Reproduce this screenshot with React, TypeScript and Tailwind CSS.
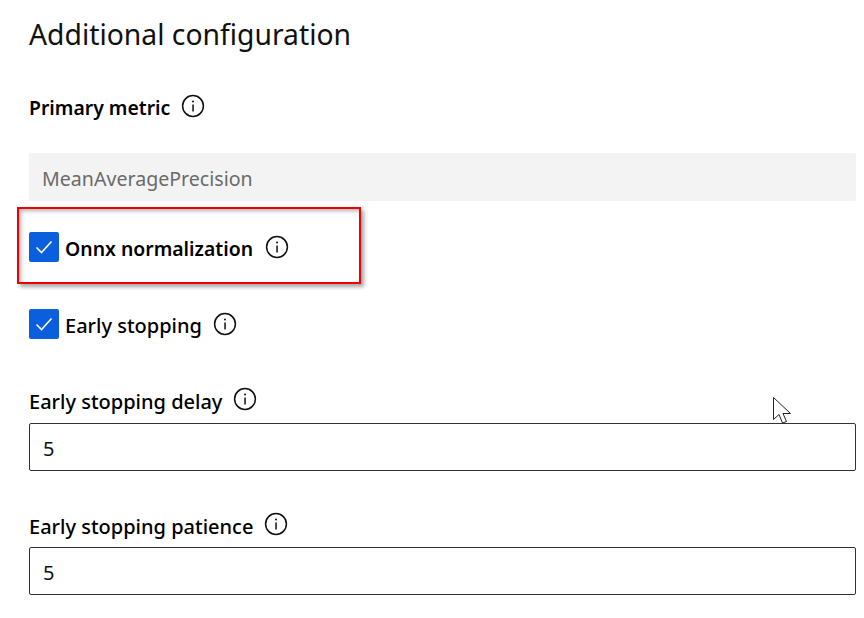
const font = "font-['Noto_Sans','Open_Sans',sans-serif]";

function InfoIcon() {
  return (
    <svg width="24" height="24" viewBox="0 0 24 24" fill="none" className="shrink-0">
      <circle cx="12" cy="12" r="10.4" stroke="#111" strokeWidth="1.5" />
      <rect x="11.3" y="10.5" width="1.5" height="7" fill="#111" />
      <circle cx="12" cy="7.6" r="1" fill="#111" />
    </svg>
  );
}

function CheckBox() {
  return (
    <span className="flex h-[30px] w-[30px] items-center justify-center rounded-[2px] bg-[#0b5fdc]">
      <svg width="18" height="14" viewBox="0 0 18 14" fill="none">
        <path d="M1.5 7.5 L6.5 12.5 L16.5 1.5" stroke="#fff" strokeWidth="1.6" />
      </svg>
    </span>
  );
}

function Field({ label, value, inputMargin }: { label: string; value: string; inputMargin: string }) {
  return (
    <div>
      <div className="flex h-[24px] items-center gap-[11px] text-[20px] font-medium text-black">
        <span className="pt-[5px]">{label}</span>
        <InfoIcon />
      </div>
      <div className={`${inputMargin} flex h-[48px] items-center rounded-[2px] border border-[#333] px-[13px] pt-[3px] text-[20px] text-[#111]`}>
        {value}
      </div>
    </div>
  );
}

export default function App() {
  return (
    <div className={`relative h-[618px] w-[864px] overflow-hidden bg-white pl-[29px] pr-[8px] ${font}`}>
      <h1 className="box-content flex h-[40px] items-center pt-[14px] text-[28.3px] font-normal leading-none text-[#111]">
        Additional configuration
      </h1>

      <div className="mt-[40px] flex h-[24px] items-center gap-[11px] text-[19.4px] font-semibold text-black">
        <span className="pt-[4px]">Primary metric</span>
        <InfoIcon />
      </div>

      <div className="mt-[35px] flex h-[48px] items-center rounded-[2px] bg-[#f3f3f3] px-[13px] pt-[3px] text-[19.6px] text-[#6a6a6a]">
        MeanAveragePrecision
      </div>

      <label className="mt-[31px] flex h-[30px] items-center text-[19.4px] font-semibold text-black">
        <CheckBox />
        <span className="ml-[6px] pt-[3px]">Onnx normalization</span>
        <span className="-mt-[1px] ml-[12px]"><InfoIcon /></span>
      </label>

      <label className="mt-[47px] flex h-[30px] items-center text-[20px] font-medium text-black">
        <CheckBox />
        <span className="ml-[6px] pt-[3px]">Early stopping</span>
        <span className="ml-[11px]"><InfoIcon /></span>
      </label>

      <div className="mt-[48px]">
        <Field label="Early stopping delay" value="5" inputMargin="mt-[12px]" />
      </div>
      <div className="mt-[41px]">
        <Field label="Early stopping patience" value="5" inputMargin="mt-[11px]" />
      </div>

      {/* annotation drawn over the page */}
      <div className="absolute left-[17px] top-[207px] h-[77px] w-[344px] border-[2px] border-[#f00000] shadow-[3px_3px_4px_rgba(0,0,0,0.35),inset_3px_3px_4px_-1px_rgba(0,0,0,0.3)]" />

      <svg className="absolute left-[772px] top-[396px]" width="22" height="30" viewBox="0 0 22 30" fill="none">
        <path d="M1.5 1.5 V23.5 L7 18.5 L10.5 27 L14.5 25.5 L11 17.5 H18.5 Z" fill="#fff" stroke="#222" strokeWidth="1" />
      </svg>
    </div>
  );
}
